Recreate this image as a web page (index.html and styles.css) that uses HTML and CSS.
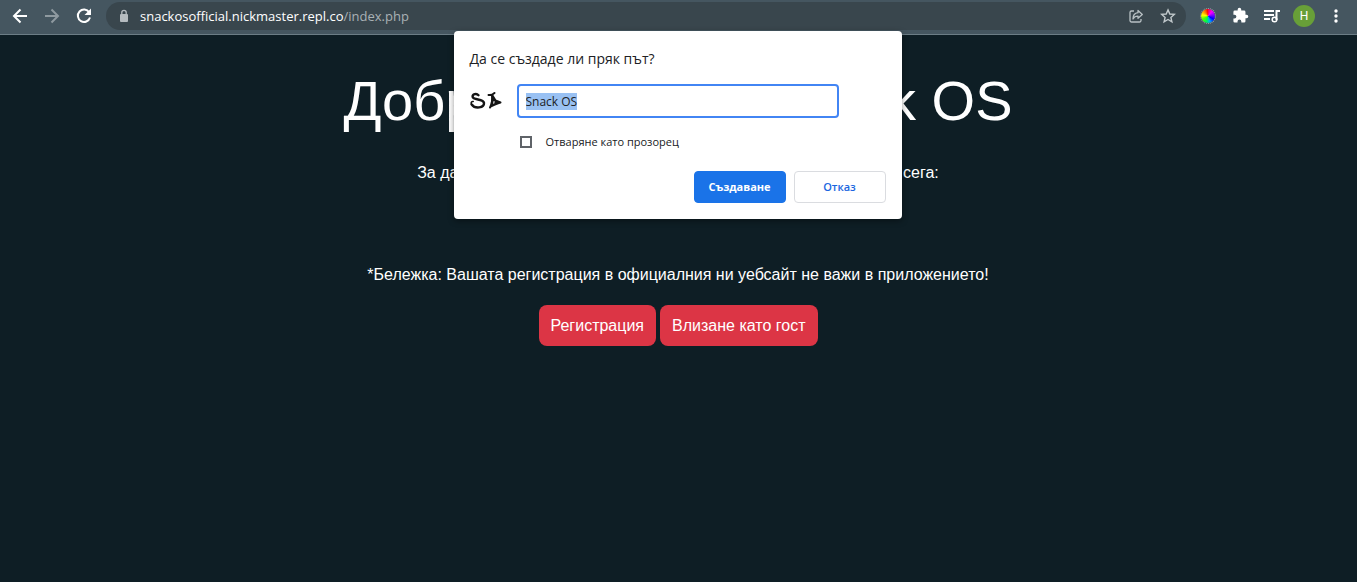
FILE: index.html
```html
<!DOCTYPE html>
<html lang="bg">
<head>
<meta charset="utf-8">
<title>Snack OS</title>
<link rel="stylesheet" href="styles.css">
</head>
<body>
<header class="toolbar">
  <nav class="nav">
    <button class="icon-btn" aria-label="Назад"><svg viewBox="0 0 20 20" width="20" height="20"><path fill="none" stroke="#fff" stroke-width="2" d="M17 10H4.500M10.500 3.500 4 10l6.500 6.500"/></svg></button>
    <button class="icon-btn" aria-label="Напред"><svg viewBox="0 0 20 20" width="20" height="20"><path fill="none" stroke="#8f9aa0" stroke-width="2" d="M3 10h12.500M9.500 3.500 16 10l-6.500 6.500"/></svg></button>
    <button class="icon-btn" aria-label="Презареждане"><svg viewBox="0 0 20 20" width="20" height="20"><path fill="none" stroke="#fff" stroke-width="2" d="M15.200 6.200A6.200 6.200 0 1 0 16 11.500"/><path fill="#fff" d="M17 2.500V9h-6.500z"/></svg></button>
  </nav>
  <div class="address">
    <svg class="lock" viewBox="0 0 12 14" width="12" height="14"><rect x="2" y="5" width="8" height="8" rx="1" fill="#b5bbbf"/><path d="M3.800 5.500V3.500a2.200 2.200 0 0 1 4.400 0v2" fill="none" stroke="#b5bbbf" stroke-width="1.300"/></svg>
    <span class="url">snackosofficial.nickmaster.repl.co<span class="path">/index.php</span></span>
    <button class="icon-btn" aria-label="Споделяне"><svg viewBox="0 0 16 16" width="16" height="16" fill="none" stroke="#b8c0c4" stroke-width="1.300"><path d="M6 3H3.500A1.500 1.500 0 0 0 2 4.500v8A1.500 1.500 0 0 0 3.500 14h8a1.500 1.500 0 0 0 1.500-1.500V11"/><path stroke-linejoin="round" d="M10 2.500 14.300 6.500 10 10.300V8.200C7.500 8.200 6 9 5 11c0-3.500 2-6 5-6.300z"/></svg></button>
    <button class="icon-btn" aria-label="Отметка"><svg viewBox="0 0 16 16" width="16" height="16"><path fill="none" stroke="#c2c9cc" stroke-width="1.400" d="M8 1.900 9.800 6l4.500.4-3.400 3 1 4.400L8 11.500l-3.900 2.300 1-4.400-3.400-3L6.200 6z"/></svg></button>
  </div>
  <div class="extensions">
    <button class="icon-btn" aria-label="Избор на цвят"><span class="wheel"></span></button>
    <button class="icon-btn" aria-label="Разширения"><svg viewBox="0 0 24 24" width="17" height="17"><path fill="#fff" d="M20.500 11H19V7a2 2 0 0 0-2-2h-4V3.500a2.500 2.500 0 0 0-5 0V5H4a2 2 0 0 0-2 2v3.800h1.500a2.700 2.700 0 0 1 0 5.400H2V20a2 2 0 0 0 2 2h3.800v-1.500a2.700 2.700 0 0 1 5.400 0V22H17a2 2 0 0 0 2-2v-4h1.500a2.500 2.500 0 0 0 0-5z"/></svg></button>
    <button class="icon-btn" aria-label="Мултимедия"><svg viewBox="0 0 18 16" width="18" height="16"><path fill="#fff" d="M1 2h10v2H1zM1 6h10v2H1zM1 10h6v2H1zM12.500 2H17v2h-2.500v8h-2z"/><circle cx="11.500" cy="11.500" r="2.300" fill="none" stroke="#fff" stroke-width="1.500"/></svg></button>
    <button class="avatar" aria-label="Профил">H</button>
    <button class="icon-btn" aria-label="Меню"><svg viewBox="0 0 4 16" width="4" height="16" fill="#fff"><circle cx="2" cy="3" r="1.700"/><circle cx="2" cy="8" r="1.700"/><circle cx="2" cy="13" r="1.700"/></svg></button>
  </div>
</header>
<main class="page">
  <h1 class="title">Добре дошъл в Snack OS</h1>
  <p class="lead">За да продължите, трябва да се регистрирате или влезнете още сега:</p>
  <p class="note">*Бележка: Вашата регистрация в официалния ни уебсайт не важи в приложението!</p>
  <div class="actions">
    <button class="btn">Регистрация</button>
    <button class="btn">Влизане като гост</button>
  </div>
</main>
<form class="dialog" role="dialog" aria-labelledby="dialog-title">
  <h2 class="dialog-title" id="dialog-title">Да се създаде ли пряк път?</h2>
  <div class="name-row">
    <svg class="logo" viewBox="0 0 32 20" width="32" height="20" fill="none" stroke="#151515" stroke-linecap="round" stroke-linejoin="round"><path stroke-width="2.400" d="M8.500 4.200C6.500 2 2.300 3 2.600 5.800 3.200 9.500 13.500 7.500 14 12c.3 5-9 6.300-12.300 1.500"/><path stroke-width="1.600" d="M1.300 13C.8 11.300 1.800 10.300 3.200 10.500"/><path stroke-width="2" d="M18.500 4c2.500.5 4-.2 6-2M22 4.500c.8 4 .2 8-2 12"/><path fill="#151515" stroke-width="2" d="M22.500 4.500 25.500 9.500l5 2c-3 .7-6 2.200-9 3.700z"/><path stroke="#fff" stroke-width="1.100" d="m24 10.500-.2 1.700"/></svg>
    <input class="name" type="text" value="Snack OS" aria-label="Име на прекия път" autofocus>
  </div>
  <label class="check"><input class="box" type="checkbox">Отваряне като прозорец</label>
  <div class="dialog-actions">
    <button class="choice primary" type="button">Създаване</button>
    <button class="choice" type="button">Отказ</button>
  </div>
</form>
<script src="script.js"></script>
</body>
</html>
```
FILE: styles.css
```css
* { box-sizing: border-box; }
body {
  margin: 0;
  min-height: 100vh;
  background: #0e1e25;
  color: #fff;
  font: 16px/24px "Liberation Sans", Arial, sans-serif;
}
button { font: inherit; cursor: pointer; }
.toolbar {
  display: flex;
  align-items: center;
  height: 35px;
  padding: 0 11px 3px 10px;
  background: #455660;
  border-bottom: 1px solid #6c7d86;
}
.nav { display: flex; gap: 12px; margin-right: 12px; }
.icon-btn {
  display: flex;
  align-items: center;
  justify-content: center;
  width: 20px;
  height: 20px;
  padding: 0;
  border: 0;
  background: none;
}
.address {
  display: flex;
  flex: 1;
  align-items: center;
  gap: 12px;
  height: 28px;
  padding: 0 8px 0 12px;
  border-radius: 14px;
  background: #39464d;
}
.url {
  flex: 1;
  color: #fff;
  font: 13px/20px "Open Sans", "Noto Sans", sans-serif;
}
.lock { margin-right: -2px; }
.path { color: #a9b1b5; }
.extensions { display: flex; align-items: center; gap: 12px; margin-left: 12px; }
.wheel {
  width: 16px;
  height: 16px;
  border: 1px dotted #a0a8ac;
  border-radius: 50%;
  background: conic-gradient(#f04, #f0f, #80f, #00f, #0af, #0f4, #5f0, #ff0, #f80, #f00) content-box;
}
.avatar {
  width: 22px;
  height: 22px;
  margin: 0 -1px;
  padding: 0;
  border: 0;
  border-radius: 50%;
  background: #689f38;
  color: #fff;
  font: 12px/22px Roboto, sans-serif;
}
.page { padding: 32px 17px 32px 16px; text-align: center; }
.title { margin: 0 0 26px; font-size: 56px; line-height: 68px; font-weight: 400; }
.lead { margin: 0 0 78px; }
.note { margin: 0 0 18px; }
.actions { display: flex; flex-wrap: wrap; justify-content: center; gap: 4px; }
.btn {
  padding: 8px 12px;
  border: 0;
  border-radius: 8px;
  background: #dc3545;
  color: #fff;
  line-height: 25px;
}
.dialog {
  position: absolute;
  top: 31px;
  left: calc(50% - 225px);
  width: 448px;
  padding: 16px;
  border-radius: 4px;
  background: #fff;
  box-shadow: 0 2px 6px rgba(0, 0, 0, .4);
  color: #202124;
  font: 11px/20px "Open Sans", "Noto Sans", sans-serif;
}
.dialog-title { margin: 0 0 13px; font-size: 14px; line-height: 24px; font-weight: 400; }
.name-row { display: flex; align-items: center; gap: 15px; padding-right: 47px; }
.name {
  flex: 1;
  min-width: 0;
  height: 34px;
  padding: 0 7px;
  border: 2px solid #4285f4;
  border-radius: 4px;
  outline: 0;
  background: #fff;
  color: #202124;
  font: inherit;
  font-size: 12px;
}
.name::selection { background: #99c1f3; color: #202124; }
.check { display: flex; align-items: center; gap: 14px; margin: 14px 0 19px 50px; }
.box {
  width: 12px;
  height: 12px;
  margin: 0;
  appearance: none;
  border: 2px solid #5f6368;
  background: #fff;
}
.dialog-actions { display: flex; justify-content: flex-end; gap: 8px; }
.choice {
  width: 92px;
  height: 32px;
  padding: 0;
  border: 1px solid #dadce0;
  border-radius: 4px;
  background: #fff;
  color: #1a66e0;
  font-weight: 600;
}
.primary { border-color: #1a73e8; background: #1a73e8; color: #fff; font-weight: 700; }
```
FILE: script.js
```js
const nameField = document.querySelector(".name");
nameField.focus();
nameField.select();
```
